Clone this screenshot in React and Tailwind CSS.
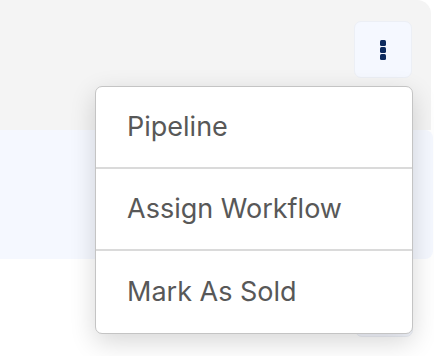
import React from 'react';

const items = ['Pipeline', 'Assign Workflow', 'Mark As Sold'];

const KebabButton = () => (
  <button className="w-[58px] h-[57px] rounded-[7px] bg-[#f5f8ff] border border-[#eceff5] flex flex-col items-center justify-center gap-[1px]">
    <span className="w-[6px] h-[6px] rounded-[1.5px] bg-[#0c2a5e]"></span>
    <span className="w-[6px] h-[6px] rounded-[1.5px] bg-[#0c2a5e]"></span>
    <span className="w-[6px] h-[6px] rounded-[1.5px] bg-[#0c2a5e]"></span>
  </button>
);

const App = () => {
  return (
    <div className="relative w-[434px] h-[356px] overflow-hidden bg-white" style={{ fontFamily: 'Inter, "Noto Sans", sans-serif' }}>
      <div className="h-[130px] bg-[#f4f4f4] rounded-tr-[14px] mr-[3px] flex justify-end pt-[21px] pr-[19px]">
        <KebabButton />
      </div>
      <div className="h-[129px] bg-[#f5f8ff] rounded-r-[8px] mr-px"></div>
      <div className="flex justify-end pt-[21px] pr-[21px]">
        <KebabButton />
      </div>

      <div className="absolute left-[95px] top-[86px] w-[318px] bg-white border border-[#c4c4c4] rounded-[7px] shadow-[0_8px_26px_rgba(0,0,0,0.16)] overflow-hidden">
        {items.map((label, i) => (
          <div
            key={label}
            className={`h-[82px] flex items-center pl-[31px] text-[27px] text-[#585858] ${i < items.length - 1 ? 'border-b-2 border-[#dadada]' : ''}`}
          >
            {label}
          </div>
        ))}
      </div>
    </div>
  );
};

export default App;
